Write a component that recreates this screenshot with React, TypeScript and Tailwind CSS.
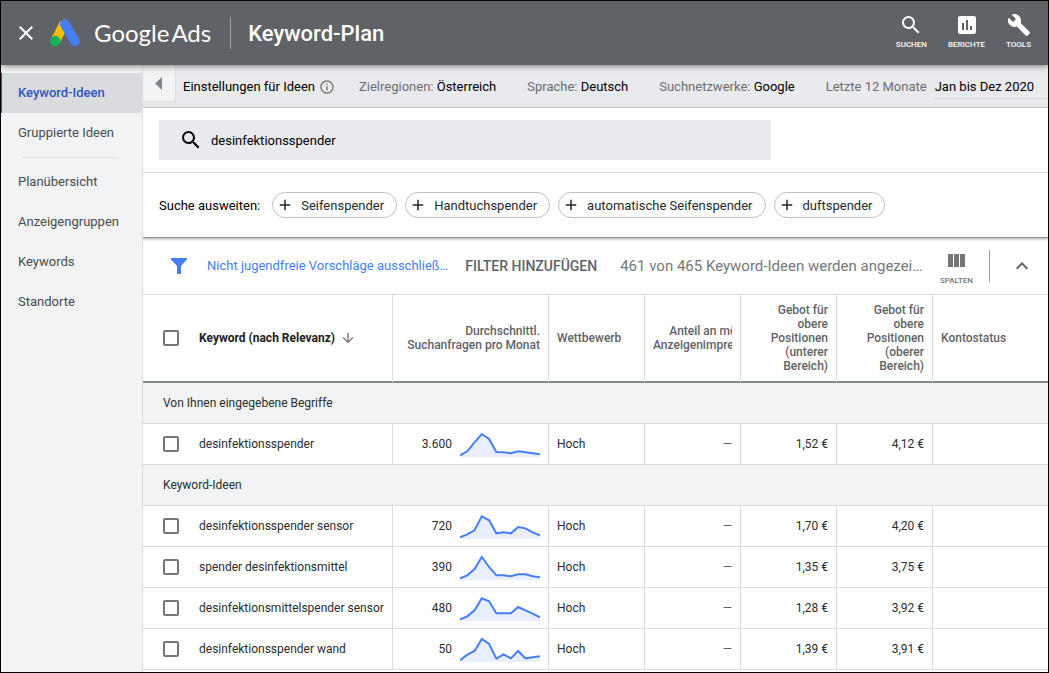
import {
  MdAdd, MdArrowDownward, MdAssessment, MdBuild, MdClose, MdExpandLess,
  MdInfoOutline, MdSearch,
} from 'react-icons/md';
import type { IconType } from 'react-icons';

type KeywordRow = {
  keyword: string;
  searches: string;
  trend: number[];
  competition: string;
  lowBid: string;
  highBid: string;
};

const TOOLS: { label: string; icon: IconType }[] = [
  { label: 'SUCHEN', icon: MdSearch },
  { label: 'BERICHTE', icon: MdAssessment },
  { label: 'TOOLS', icon: MdBuild },
];

const PLAN_LINKS = ['Planübersicht', 'Anzeigengruppen', 'Keywords', 'Standorte'];

const SETTINGS = [
  { label: 'Zielregionen:', value: 'Österreich' },
  { label: 'Sprache:', value: 'Deutsch' },
  { label: 'Suchnetzwerke:', value: 'Google' },
];

const SUGGESTIONS = ['Seifenspender', 'Handtuchspender', 'automatische Seifenspender', 'duftspender'];

const SECTIONS: { title: string; rows: KeywordRow[] }[] = [
  {
    title: 'Von Ihnen eingegebene Begriffe',
    rows: [
      { keyword: 'desinfektionsspender', searches: '3.600', trend: [5, 17, 44, 69, 54, 15, 14, 11, 17, 14, 11, 8], competition: 'Hoch', lowBid: '1,52 €', highBid: '4,12 €' },
    ],
  },
  {
    title: 'Keyword-Ideen',
    rows: [
      { keyword: 'desinfektionsspender sensor', searches: '720', trend: [5, 14, 26, 68, 56, 17, 20, 17, 36, 32, 20, 11], competition: 'Hoch', lowBid: '1,70 €', highBid: '4,20 €' },
      { keyword: 'spender desinfektionsmittel', searches: '390', trend: [5, 14, 33, 69, 39, 14, 14, 11, 17, 17, 11, 8], competition: 'Hoch', lowBid: '1,35 €', highBid: '3,75 €' },
      { keyword: 'desinfektionsmittelspender sensor', searches: '480', trend: [5, 14, 32, 68, 59, 23, 23, 23, 42, 32, 22, 11], competition: 'Hoch', lowBid: '1,28 €', highBid: '3,92 €' },
      { keyword: 'desinfektionsspender wand', searches: '50', trend: [5, 22, 33, 69, 54, 10, 23, 11, 33, 11, 14, 17], competition: 'Hoch', lowBid: '1,39 €', highBid: '3,91 €' },
    ],
  },
];

function AdsLogo() {
  return (
    <svg className="h-7 w-[30px]" viewBox="0 0 90 84" aria-hidden="true">
      <path d="M43 13 16 66" stroke="#fbbc04" strokeWidth="29" />
      <path d="M44.500 15.500 75 67" stroke="#447ff6" strokeWidth="29" strokeLinecap="round" />
      <circle cx="16" cy="66" r="15.500" fill="#12b35a" />
    </svg>
  );
}

function Sparkline({ values }: { values: number[] }) {
  const line = values.map((v, i) => `${((i * 240) / (values.length - 1)).toFixed(1)},${78 - v}`).join(' ');

  return (
    <svg className="h-[26px] w-20 shrink-0" viewBox="0 0 240 78" aria-hidden="true">
      <polygon points={`0,78 ${line} 240,78`} fill="#e8eefc" />
      <polyline points={line} fill="none" stroke="#447ff6" strokeWidth="6" />
    </svg>
  );
}

function Checkbox({ label }: { label: string }) {
  return (
    <input
      type="checkbox"
      aria-label={label}
      className="block size-4 appearance-none rounded-[2px] border-2 border-[#757575] bg-white checked:bg-[#757575]"
    />
  );
}

function Header() {
  return (
    <header className="relative z-10 flex h-16 shrink-0 items-center bg-[#5f6266] pr-[17px] pl-[13px] text-white shadow-[0_1px_6px_rgba(0,0,0,0.5)]">
      <button type="button" aria-label="Schließen">
        <MdClose size={24} />
      </button>
      <div className="ml-3 flex items-center">
        <AdsLogo />
        <div className="ml-3.5 flex gap-0.5 font-[Lato] text-[24px] leading-8 whitespace-nowrap">
          <span>Google</span>
          <span>Ads</span>
        </div>
      </div>
      <div className="ml-[19px] h-8 border-l border-[#a0a2a5]" />
      <h1 className="ml-[17px] text-[22px] font-medium whitespace-nowrap">Keyword-Plan</h1>
      <nav className="ml-auto flex gap-[21px]">
        {TOOLS.map(({ label, icon: Icon }) => (
          <button key={label} type="button" className="flex flex-col items-center text-[8px] leading-4 font-medium">
            <Icon size={24} aria-hidden="true" />
            {label}
          </button>
        ))}
      </nav>
    </header>
  );
}

function Sidebar() {
  const link = 'flex h-10 items-center pl-[17px] text-[#494c50]';

  return (
    <nav className="w-[142px] shrink-0 border-r border-[#dadce0] bg-[#f1f3f4] pt-2 text-[13px]">
      <a href="#ideen" aria-current="page" className="flex h-10 items-center border-l border-[#2a56c6] bg-[#dadbdf] pl-4 font-medium text-[#2a56c6]">
        Keyword-Ideen
      </a>
      <a href="#gruppierte" className={link}>Gruppierte Ideen</a>
      <hr className="my-1 mr-6 ml-[21px] border-[#dadce0]" />
      {PLAN_LINKS.map((name) => (
        <a key={name} href={`#${name.toLowerCase()}`} className={link}>{name}</a>
      ))}
    </nav>
  );
}

function SettingsBar() {
  return (
    <div className="flex h-[43px] shrink-0 border-b border-[#cfd1d5] bg-[#e8eaed] text-[13px] whitespace-nowrap text-black">
      <button type="button" aria-label="Einklappen" className="flex h-[37px] w-[33px] shrink-0 items-center border-r border-b border-[#dadce0] bg-[#f1f3f4] pl-3">
        <svg className="h-[13px] w-[7px]" viewBox="0 0 7 13" fill="#80868b" aria-hidden="true">
          <path d="M7 0v13L0 6.500z" />
        </svg>
      </button>
      <div className="flex h-[43px] min-w-0 flex-1 items-center gap-[31px] pl-[7px]">
        <span className="-mr-[7px] flex items-center gap-1">
          Einstellungen für Ideen
          <MdInfoOutline size={16} className="text-[#757575]" aria-hidden="true" />
        </span>
        {SETTINGS.map(({ label, value }) => (
          <span key={label}>
            <span className="text-[#6b6e73]">{label}</span> {value}
          </span>
        ))}
        <div className="flex flex-1 gap-2 pt-px">
          <span className="py-0.5 text-[#6b6e73]">Letzte 12 Monate</span>
          <button type="button" className="flex-1 border-b border-[#d3d5d9] py-0.5 text-left">Jan bis Dez 2020</button>
        </div>
      </div>
    </div>
  );
}

function SearchPanel() {
  return (
    <section className="relative shrink-0 border-b border-[#8f9396] bg-white text-[13px] text-black shadow-[0_1px_3px_rgba(0,0,0,0.35)]">
      <div className="border-b border-[#dadce0] px-4 py-3">
        <label className="flex h-10 max-w-[612px] items-center gap-2 bg-[#e8eaed] pl-5">
          <MdSearch size={24} aria-hidden="true" />
          <input type="text" aria-label="Keywords" defaultValue="desinfektionsspender" className="min-w-0 flex-1 bg-transparent pt-px outline-none" />
        </label>
      </div>
      <div className="flex h-16 items-center gap-2 pl-4 whitespace-nowrap">
        <span className="mr-1 pt-px">Suche ausweiten:</span>
        {SUGGESTIONS.map((name) => (
          <button key={name} type="button" className="flex h-[26px] items-center gap-[7px] rounded-full border border-[#bdc1c6] pr-3 pl-[3px] text-[#27282b]">
            <MdAdd size={18} aria-hidden="true" />
            <span className="pt-px">{name}</span>
          </button>
        ))}
      </div>
    </section>
  );
}

function FilterBar() {
  return (
    <div className="flex h-14 shrink-0 items-center pr-3.5 pl-7 whitespace-nowrap">
      <button type="button" aria-label="Filter" className="shrink-0">
        <svg className="size-4" viewBox="0 0 16 16" fill="#447ff6" aria-hidden="true">
          <path d="M0 0h16v1.500L10 8v8H6V8L0 1.500z" />
        </svg>
      </button>
      <button type="button" className="ml-5 shrink-0 text-[13px] text-[#447ff6]">Nicht jugendfreie Vorschläge ausschließ…</button>
      <button type="button" className="ml-[17px] shrink-0 text-[14px] font-medium text-[#5f6368]">FILTER HINZUFÜGEN</button>
      <span className="ml-[23px] min-w-0 text-[15px] text-[#75787c]">461 von 465 Keyword-Ideen werden angezei…</span>
      <button type="button" className="ml-auto flex shrink-0 flex-col items-center gap-2 pt-2 text-[8px] leading-3 font-medium text-[#757575]">
        <svg className="h-[13px] w-[17px]" viewBox="0 0 17 13" fill="#757575" aria-hidden="true">
          <path d="M0 0h5v13H0zM6 0h5v13H6zM12 0h5v13h-5z" />
        </svg>
        SPALTEN
      </button>
      <div className="ml-4 h-8 border-l border-[#9aa0a6]" />
      <button type="button" aria-label="Einklappen" className="ml-5 text-[#5f6368]">
        <MdExpandLess size={24} />
      </button>
    </div>
  );
}

function KeywordTable() {
  const cell = 'border-r border-[#dadce0] px-2';

  return (
    <table className="w-full table-fixed border-separate border-spacing-0 border-t border-[#dadce0] text-[12px] text-[#2b2c2f]">
      <colgroup>
        <col className="w-14" />
        <col className="w-[194px]" />
        <col className="w-[156px]" />
        <col className="w-24" />
        <col className="w-24" />
        <col className="w-24" />
        <col className="w-24" />
        <col />
      </colgroup>
      <thead className="text-right leading-[14px] text-[#5f6368] [&_th]:h-[88px] [&_th]:border-b-2 [&_th]:border-b-[#80868b] [&_th]:font-medium">
        <tr>
          <th className="pl-5"><Checkbox label="Alle auswählen" /></th>
          <th className="border-r border-[#dadce0] text-left text-[#202124]">
            <span className="flex items-center gap-[5px] font-bold">
              Keyword (nach Relevanz)
              <MdArrowDownward size={16} className="text-[#757575]" aria-hidden="true" />
            </span>
          </th>
          <th className={cell}>Durchschnittl. Suchanfragen pro Monat</th>
          <th className={`${cell} text-left`}>Wettbewerb</th>
          <th className={cell}>
            <div className="overflow-hidden">
              <div className="w-max">Anteil an möglichen<br />Anzeigenimpressionen</div>
            </div>
          </th>
          <th className={cell}>Gebot für obere Positionen (unterer Bereich)</th>
          <th className={cell}>Gebot für obere Positionen (oberer Bereich)</th>
          <th className="px-2 text-left">Kontostatus</th>
        </tr>
      </thead>
      {SECTIONS.map(({ title, rows }) => (
        <tbody key={title} className="[&_td]:h-[41px] [&_td]:border-b [&_td]:border-[#dadce0] [&_th]:h-[41px] [&_th]:border-b [&_th]:border-[#dadce0]">
          <tr>
            <th colSpan={8} className="bg-[#f1f3f4] pl-5 text-left font-normal">{title}</th>
          </tr>
          {rows.map((row) => (
            <tr key={row.keyword}>
              <td className="pl-5"><Checkbox label={row.keyword} /></td>
              <td className="border-r whitespace-nowrap">{row.keyword}</td>
              <td className={cell}>
                <div className="flex items-center justify-end gap-2">
                  {row.searches}
                  <Sparkline values={row.trend} />
                </div>
              </td>
              <td className={cell}>{row.competition}</td>
              <td className={`${cell} text-right text-[#5f6368]`}>—</td>
              <td className={`${cell} text-right`}>{row.lowBid}</td>
              <td className={`${cell} text-right`}>{row.highBid}</td>
              <td />
            </tr>
          ))}
        </tbody>
      ))}
    </table>
  );
}

export default function App() {
  return (
    <div className="flex h-screen flex-col overflow-hidden border border-black bg-white font-[Roboto,sans-serif]">
      <Header />
      <div className="flex min-h-0 flex-1">
        <Sidebar />
        <main className="flex min-w-0 flex-1 flex-col overflow-hidden">
          <SettingsBar />
          <SearchPanel />
          <FilterBar />
          <KeywordTable />
        </main>
      </div>
    </div>
  );
}
